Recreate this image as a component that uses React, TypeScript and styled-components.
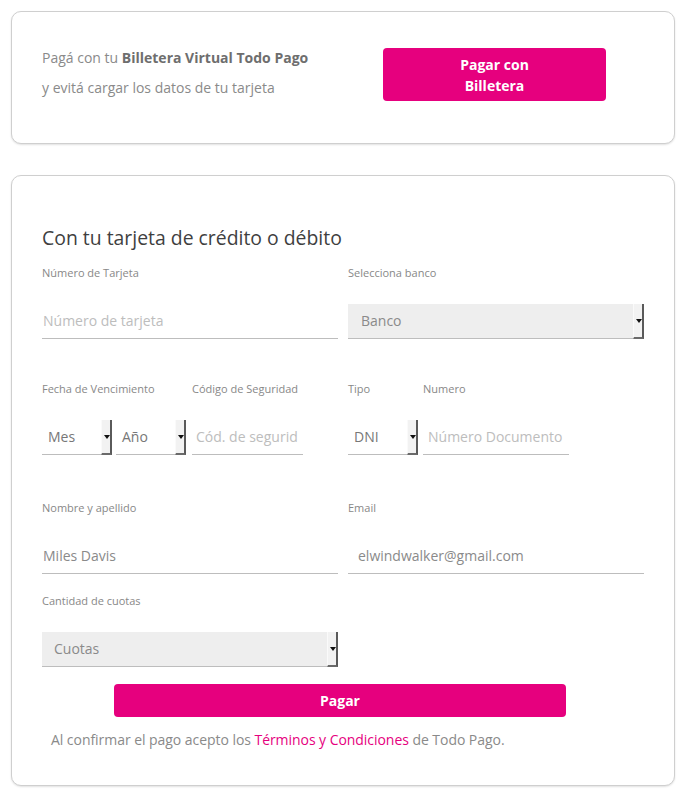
import React from "react";
import styled, { createGlobalStyle } from "styled-components";

const Global = createGlobalStyle`
  html, body { margin: 0; padding: 0; background: #fff; }
  body { font-family: "Open Sans", "DejaVu Sans", sans-serif; }
  * { box-sizing: border-box; }
`;

const Page = styled.div`
  padding: 11px 13px 11px 11px;
  display: flex;
  flex-direction: column;
  gap: 31px;
`;

const Card = styled.section`
  border: 1px solid #cfcfcf;
  border-radius: 10px;
  box-shadow: 0 1px 2px rgba(0, 0, 0, 0.12);
  background: #fff;
`;

const WalletCard = styled(Card)`
  padding: 31px 30px 40px 30px;
  display: grid;
  grid-template-columns: 1fr 1fr;
  column-gap: 10px;
  align-items: start;
`;

const WalletText = styled.p`
  margin: 0;
  font-size: 14px;
  line-height: 30px;
  color: #8a8a8a;
  b { color: #6e6e6e; font-weight: 700; }
`;

const PinkButton = styled.button<{ $w?: string; $h: number }>`
  font-family: "Open Sans", "DejaVu Sans", sans-serif;
  background: #e6007e;
  color: #fff;
  border: none;
  border-radius: 4px;
  font-weight: 700;
  font-size: 14px;
  line-height: 21px;
  width: ${(p) => p.$w || "100%"};
  height: ${(p) => p.$h}px;
  padding: 0;
  display: flex;
  align-items: center;
  justify-content: center;
  text-align: center;
`;

const WalletButtonWrap = styled.div`
  display: flex;
  justify-content: center;
  padding-right: 3px;
  margin-top: 5px;
`;

const FormCard = styled(Card)`
  padding: 49px 30px 36px 30px;
`;

const Title = styled.h2`
  margin: 0 0 15px 0;
  font-weight: 400;
  font-size: 19.4px;
  line-height: 25px;
  color: #3f3f3f;
`;

const Row = styled.div<{ $mt: number }>`
  display: grid;
  grid-template-columns: 1fr 1fr;
  column-gap: 10px;
  margin-top: ${(p) => p.$mt}px;
`;

const Group = styled.div`
  display: flex;
  gap: 4px;
`;

const Field = styled.div<{ $w?: number; $ml?: number }>`
  display: flex;
  flex-direction: column;
  ${(p) => (p.$w ? `width: ${p.$w}px; flex: none;` : "flex: 1;")}
  margin-left: ${(p) => p.$ml || 0}px;
`;

const Label = styled.label`
  font-size: 11px;
  line-height: 16px;
  height: 16px;
  color: #888;
  margin-bottom: 23px;
  white-space: nowrap;
`;

const Input = styled.div<{ $pad: number; $ph?: boolean }>`
  height: 35px;
  border-bottom: 1px solid #bdbdbd;
  padding-left: ${(p) => p.$pad}px;
  font-size: 14px;
  line-height: 34px;
  color: ${(p) => (p.$ph ? "#bdbdbd" : "#8a8a8a")};
  white-space: nowrap;
  overflow: hidden;
`;

const Select = styled.div<{ $gray?: boolean; $pad: number }>`
  position: relative;
  height: 35px;
  background: ${(p) => (p.$gray ? "#eeeeee" : "#fff")};
  border-bottom: 1px solid #bdbdbd;
  padding-left: ${(p) => p.$pad}px;
  font-size: 14px;
  line-height: 34px;
  color: ${(p) => (p.$gray ? "#8a8a8a" : "#777")};
`;

const Arrow = styled.span`
  position: absolute;
  right: 0;
  top: 0;
  bottom: -1px;
  width: 11px;
  background: #f2f2f2;
  border-left: 1px solid #fafafa;
  border-right: 2px solid #5a5a5a;
  border-bottom: 2px solid #6a6a6a;
  &::after {
    content: "";
    position: absolute;
    left: 2px;
    top: 15px;
    border-left: 3px solid transparent;
    border-right: 3px solid transparent;
    border-top: 4px solid #111;
  }
`;

const PayWrap = styled.div`
  margin-top: 17px;
  padding-left: 72px;
`;

const Legal = styled.p`
  margin: 14px 0 0 9px;
  font-size: 14px;
  line-height: 18px;
  letter-spacing: -0.05px;
  color: #8a8a8a;
  a { color: #e6007e; text-decoration: none; }
`;

export default function App() {
  return (
    <>
      <Global />
      <Page>
        <WalletCard>
          <WalletText>
            Pagá con tu <b>Billetera Virtual Todo Pago</b>
            <br />
            y evitá cargar los datos de tu tarjeta
          </WalletText>
          <WalletButtonWrap>
            <PinkButton $w="223px" $h={53}>
              Pagar con
              <br />
              Billetera
            </PinkButton>
          </WalletButtonWrap>
        </WalletCard>

        <FormCard>
          <Title>Con tu tarjeta de crédito o débito</Title>
          <Row $mt={0}>
            <Field>
              <Label>Número de Tarjeta</Label>
              <Input $pad={1} $ph>
                Número de tarjeta
              </Input>
            </Field>
            <Field>
              <Label>Selecciona banco</Label>
              <Select $gray $pad={13}>
                Banco
                <Arrow />
              </Select>
            </Field>
          </Row>

          <Row $mt={42}>
            <Group>
              <Field $w={70}>
                <Label>Fecha de Vencimiento</Label>
                <Select $pad={6}>
                  Mes
                  <Arrow />
                </Select>
              </Field>
              <Field $w={70}>
                <Label> </Label>
                <Select $pad={6}>
                  Año
                  <Arrow />
                </Select>
              </Field>
              <Field $w={111} $ml={2}>
                <Label>Código de Seguridad</Label>
                <Input $pad={4} $ph>
                  Cód. de segurid
                </Input>
              </Field>
            </Group>
            <Group>
              <Field $w={70}>
                <Label>Tipo</Label>
                <Select $pad={6}>
                  DNI
                  <Arrow />
                </Select>
              </Field>
              <Field $w={146} $ml={1}>
                <Label>Numero</Label>
                <Input $pad={5} $ph>
                  Número Documento
                </Input>
              </Field>
            </Group>
          </Row>

          <Row $mt={45}>
            <Field>
              <Label>Nombre y apellido</Label>
              <Input $pad={1}>Miles Davis</Input>
            </Field>
            <Field>
              <Label>Email</Label>
              <Input $pad={10}>elwindwalker@gmail.com</Input>
            </Field>
          </Row>

          <Row $mt={19}>
            <Field>
              <Label>Cantidad de cuotas</Label>
              <Select $gray $pad={12}>
                Cuotas
                <Arrow />
              </Select>
            </Field>
          </Row>

          <PayWrap>
            <PinkButton $w="452px" $h={33}>
              Pagar
            </PinkButton>
          </PayWrap>

          <Legal>
            Al confirmar el pago acepto los <a href="#">Términos y Condiciones</a> de Todo Pago.
          </Legal>
        </FormCard>
      </Page>
    </>
  );
}
